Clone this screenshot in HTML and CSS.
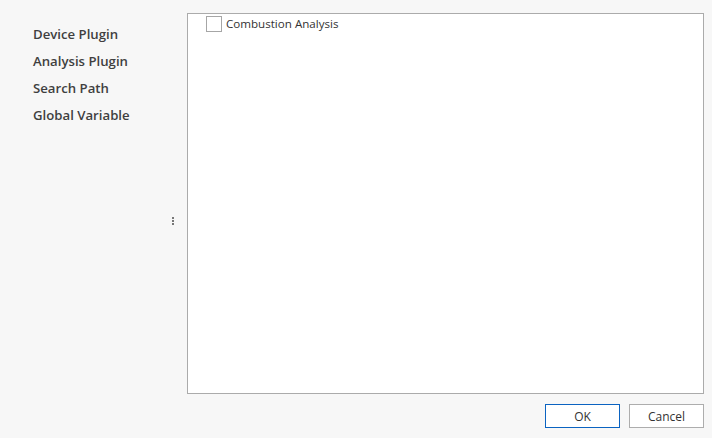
FILE: index.html
```html
<!DOCTYPE html>
<html>
<head>
<meta charset="utf-8">
<link rel="stylesheet" href="styles.css">
</head>
<body>
<div class="dialog">
  <div class="main">
    <nav class="nav">
      <div class="nav-item">Device Plugin</div>
      <div class="nav-item">Analysis Plugin</div>
      <div class="nav-item">Search Path</div>
      <div class="nav-item">Global Variable</div>
    </nav>
    <div class="splitter"><span class="dots"><i></i><i></i><i></i></span></div>
    <div class="panel">
      <label class="check-row"><span class="checkbox"></span><span class="check-label">Combustion Analysis</span></label>
    </div>
  </div>
  <div class="footer">
    <button class="btn btn-primary">OK</button>
    <button class="btn">Cancel</button>
  </div>
</div>
</body>
</html>
```
FILE: styles.css
```css
html, body {
  margin: 0;
  padding: 0;
  background: #f7f7f7;
}
body {
  width: 712px;
  height: 438px;
  overflow: hidden;
  font-family: "Open Sans", "Noto Sans", "Liberation Sans", sans-serif;
  color: #333;
}
.dialog {
  display: flex;
  flex-direction: column;
  padding: 13px 8px 0 0;
  box-sizing: border-box;
  height: 438px;
}
.main {
  display: flex;
  height: 381px;
}
.nav {
  width: 165px;
  padding: 8px 0 0 33px;
  box-sizing: border-box;
  display: flex;
  flex-direction: column;
}
.nav-item {
  height: 27px;
  line-height: 27px;
  font-size: 13.2px;
  font-weight: 600;
  color: #3f3f3f;
  white-space: nowrap;
}
.splitter {
  width: 22px;
  display: flex;
  align-items: center;
  justify-content: center;
  padding-top: 34px;
}
.dots {
  display: flex;
  flex-direction: column;
  gap: 1px;
  margin-left: -6px;
}
.dots i {
  display: block;
  width: 2px;
  height: 2px;
  background: #777;
}
.panel {
  flex: 1;
  background: #fff;
  border: 1px solid #ababab;
  padding: 1px 0 0 18px;
}
.check-row {
  display: flex;
  align-items: center;
  gap: 4px;
  height: 18px;
}
.checkbox {
  width: 14px;
  height: 14px;
  border: 1px solid #a6a6a6;
  background: #fff;
  margin-top: -1px;
}
.check-label {
  font-size: 11.6px;
  color: #333;
  margin-top: -2px;
}
.footer {
  display: flex;
  justify-content: flex-end;
  gap: 9px;
  padding-top: 10px;
}
.btn {
  width: 75px;
  height: 24px;
  border: 1px solid #adadad;
  background: #fff;
  font-family: "Open Sans", "Noto Sans", sans-serif;
  font-size: 12px;
  color: #333;
  padding: 0;
  margin: 0;
}
.btn-primary {
  border-color: #0b63c1;
}
```
